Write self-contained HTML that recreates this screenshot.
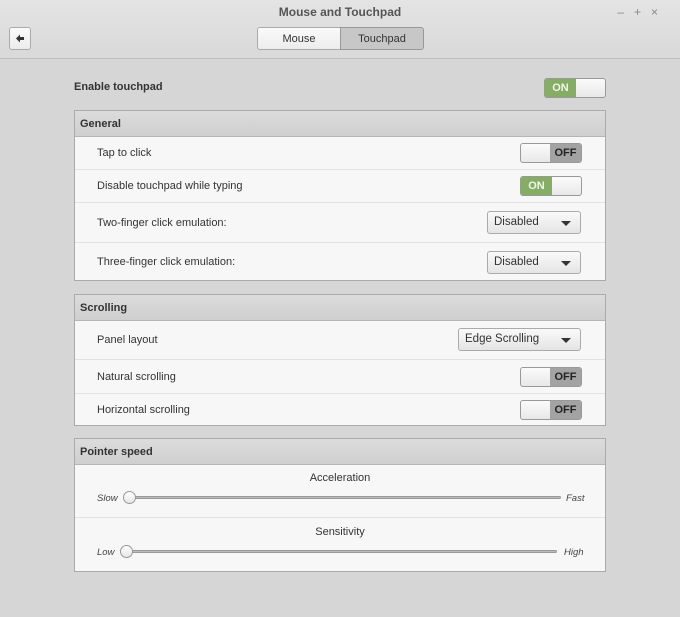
<!DOCTYPE html><html><head><style>
*{box-sizing:border-box;margin:0;padding:0}
body{width:680px;height:617px;background:#d6d6d6;font-family:"Liberation Sans",sans-serif;font-size:11px;color:#333;position:relative;overflow:hidden}
.a{position:absolute}
.tb{left:0;top:0;width:680px;height:59px;background:linear-gradient(#e4e4e4,#d9d9d9);border-bottom:1px solid #bdbdbd}
.title{left:0;width:680px;top:5px;text-align:center;font-weight:bold;color:#555;font-size:12px}
.btn{background:linear-gradient(#fafafa,#ececec);border:1px solid #aaa;border-radius:3px}
.box{left:74px;width:532px;border:1px solid #aaa;background:#f7f7f7}
.hd{height:26px;background:linear-gradient(#dcdcdc,#cfcfcf);border-bottom:1px solid #b5b5b5;font-weight:bold;padding:7px 0 0 5px;color:#333}
.row{position:relative;border-top:1px solid #e2e2e2;padding-left:22px;display:flex;align-items:center}
.row:nth-child(2){border-top:none}
.sw{position:absolute;width:62px;height:20px;border:1px solid #999;border-radius:3px;overflow:hidden;background:linear-gradient(#fbfbfb,#e8e8e8)}
.on .k{position:absolute;left:0;top:0;width:31px;height:18px;background:#86ad65;font-weight:bold;text-align:center;line-height:18px;color:#f0f6e8}
.off .k{position:absolute;right:0;top:0;width:31px;height:18px;background:#a3a3a3;color:#222;font-weight:bold;text-align:center;line-height:18px}
.dd{position:absolute;height:23px;border:1px solid #aaa;border-radius:3px;background:linear-gradient(#fafafa,#e5e5e5);padding:4px 0 0 6px;font-size:11.5px}
.dd:after{content:"";position:absolute;right:9px;top:9px;border-left:5px solid transparent;border-right:5px solid transparent;border-top:5px solid #333}
.trk{position:absolute;height:3px;background:#bbb;border:1px solid #999;border-radius:2px}
.knob{position:absolute;width:13px;height:13px;border-radius:50%;border:1px solid #999;background:linear-gradient(#fff,#e6e6e6)}
.it{position:absolute;font-style:italic;font-size:9.5px;color:#444}
</style></head><body>
<div class="a tb"></div>
<div class="a title">Mouse and Touchpad</div>
<div class="a" style="right:12px;top:5px;color:#888;font-size:12px;letter-spacing:10px">–+×</div>
<div class="a btn" style="left:9px;top:27px;width:22px;height:23px"><svg width="20" height="21" viewBox="0 0 20 21"><path d="M6 10.5L10 6.5V9H14V12H10V14.5Z" fill="#333"/></svg></div>
<div class="a btn" style="left:257px;top:27px;width:84px;height:23px;border-radius:3px 0 0 3px;text-align:center;line-height:22px">Mouse</div>
<div class="a" style="left:340px;top:27px;width:84px;height:23px;border:1px solid #999;border-radius:0 3px 3px 0;background:#c7c7c7;text-align:center;line-height:22px">Touchpad</div>
<div class="a" style="left:74px;top:81px;font-weight:bold">Enable touchpad</div>
<div class="sw on" style="left:544px;top:78px"><div class="k">ON</div></div>

<div class="a box" style="top:110px;height:171px">
<div class="hd">General</div>
<div class="row" style="height:32px">Tap to click<div class="sw off" style="left:445px;top:6px"><div class="k">OFF</div></div></div>
<div class="row" style="height:33px">Disable touchpad while typing<div class="sw on" style="left:445px;top:6px"><div class="k">ON</div></div></div>
<div class="row" style="height:40px">Two-finger click emulation:<div class="dd" style="left:412px;top:8px;width:94px">Disabled</div></div>
<div class="row" style="height:39px">Three-finger click emulation:<div class="dd" style="left:412px;top:8px;width:94px">Disabled</div></div>
</div>

<div class="a box" style="top:294px;height:132px">
<div class="hd">Scrolling</div>
<div class="row" style="height:38px">Panel layout<div class="dd" style="left:383px;top:7px;width:123px">Edge Scrolling</div></div>
<div class="row" style="height:34px">Natural scrolling<div class="sw off" style="left:445px;top:7px"><div class="k">OFF</div></div></div>
<div class="row" style="height:33px">Horizontal scrolling<div class="sw off" style="left:445px;top:6px"><div class="k">OFF</div></div></div>
</div>

<div class="a box" style="top:438px;height:134px">
<div class="hd">Pointer speed</div>
<div class="a" style="left:0;top:33px;width:530px;text-align:center">Acceleration</div>
<div class="it" style="left:22px;top:54px">Slow</div>
<div class="trk" style="left:56px;top:57px;width:430px"></div>
<div class="knob" style="left:48px;top:52px"></div>
<div class="it" style="left:491px;top:54px">Fast</div>
<div class="a" style="left:0;top:78px;width:530px;border-top:1px solid #e2e2e2"></div>
<div class="a" style="left:0;top:87px;width:530px;text-align:center">Sensitivity</div>
<div class="it" style="left:22px;top:108px">Low</div>
<div class="trk" style="left:52px;top:111px;width:430px"></div>
<div class="knob" style="left:45px;top:106px"></div>
<div class="it" style="left:489px;top:108px">High</div>
</div>
</body></html>
